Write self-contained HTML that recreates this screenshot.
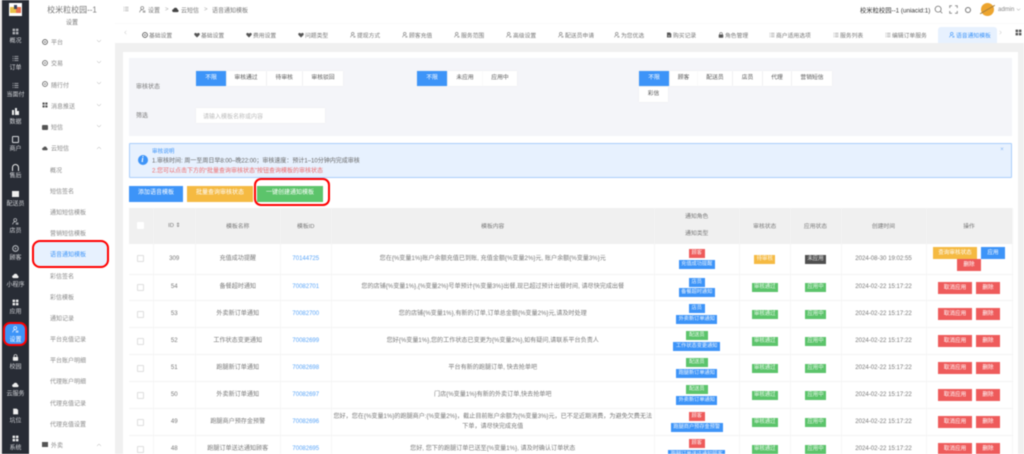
<!DOCTYPE html>
<html lang="zh"><head><meta charset="utf-8"><title>语音通知模板</title>
<style>
*{box-sizing:border-box}
html,body{margin:0;padding:0;width:1024px;height:454px;overflow:hidden;background:#fff}
#r{position:relative;width:1024px;height:454px;overflow:hidden;font-family:"Liberation Sans","Noto Sans CJK SC",sans-serif;font-size:6px;color:#666;filter:blur(.4px);background:#f0f0f0}
.a{position:absolute}
.c{position:absolute;transform:translate(-50%,-50%);white-space:nowrap}
.l{position:absolute;transform:translateY(-50%);white-space:nowrap}
svg{display:block}
.side{left:2px;top:0;width:27px;height:454px;background:#282c35}
.side .c{color:#d5d7db;font-size:6px}
.menu{left:29px;top:0;width:86px;height:454px;background:#fff}
.menu .l{color:#858585}
.b{position:absolute;height:15px;line-height:15px;text-align:center;background:#fff;color:#555;font-size:5.8px;top:71px;box-shadow:0 0 1px #e6e6e6}
.b.on{background:#3d94f8;color:#fff}
.btn{position:absolute;top:186px;height:15.5px;line-height:15.5px;text-align:center;color:#fff;font-size:6px}
table{position:absolute;left:129px;top:208px;width:883px;border-collapse:collapse;table-layout:fixed;background:#fff}
th{background:#f0f0f0;font-weight:normal;color:#777;font-size:5.8px;padding:0;text-align:center;border-right:1px solid #f4f4f4}
td{padding:0;text-align:center;color:#777;font-size:6.1px;border-bottom:1px solid #f3f3f3;border-right:1px solid #f7f7f7;line-height:10.5px}
td a{color:#5aa5f8;text-decoration:none;font-size:6px}
.cb{display:block;width:7px;height:7px;border:1px solid #dedede;border-radius:1px;background:#fff;margin:0 auto}
.g{display:block;width:max-content;margin:0 auto;height:9px;line-height:9px;padding:0 3px;color:rgba(255,255,255,.88);font-size:5.2px;white-space:nowrap;overflow:hidden}
.g+.g{margin-top:1.5px;padding:0 2.5px}
.re{background:#ee5b5b}.bl{background:#3d94f8}.gr{background:#5cc46b}.ye{background:#f5ba42}.da{background:#4f4f4f}
.s{display:inline-block;height:9px;line-height:9px;color:rgba(255,255,255,.88);font-size:5.4px;text-align:center}
.o{display:inline-block;height:12px;line-height:12px;color:#fff;font-size:5.6px;text-align:center;vertical-align:top}
.tab{position:absolute;top:35px;transform:translateY(-50%);font-size:5.8px;color:#777;white-space:nowrap}
.ti{position:absolute;top:32px;width:6px;height:6px}
</style></head><body>
<div id="r">
<svg width="0" height="0" style="position:absolute"><defs>
<symbol id="u" viewBox="0 0 12 12"><circle cx="5.5" cy="3.5" r="2.6" fill="none" stroke="currentColor" stroke-width="1.1"/><path d="M1 11c.5-3 2.200-4.500 4.500-4.500M6.500 8.500h4.500M6.500 10.500h4.500" fill="none" stroke="currentColor" stroke-width="1.1"/></symbol>
<symbol id="h" viewBox="0 0 12 12"><path d="M6 11L1 6C-.5 3.500 1.500 1.500 3.500 1.800 4.700 2 5.500 2.700 6 3.500 6.500 2.700 7.300 2 8.500 1.800 10.500 1.500 12.500 3.500 11 6Z" fill="currentColor"/></symbol>
<symbol id="li" viewBox="0 0 12 12"><path d="M1 2.500h1.500M4 2.500h7M1 6h1.500M4 6h7M1 9.500h1.500M4 9.500h7" stroke="currentColor" stroke-width="1.100" fill="none"/></symbol>
<symbol id="lk" viewBox="0 0 12 12"><rect x="1.500" y="5" width="9" height="6.500" rx="1" fill="currentColor"/><path d="M3.500 5V3.500a2.500 2.500 0 0 1 5 0V5" fill="none" stroke="currentColor" stroke-width="1.200"/></symbol>
<symbol id="cl" viewBox="0 0 12 12"><path d="M3 10.500a2.500 2.500 0 0 1-.5-5 3.600 3.600 0 0 1 7 .5 2.300 2.300 0 0 1 0 4.500Z" fill="currentColor"/></symbol>
<symbol id="gr" viewBox="0 0 12 12"><rect x="1" y="1" width="4.300" height="4.300" rx=".6" fill="currentColor"/><rect x="6.700" y="1" width="4.300" height="4.300" rx=".6" fill="currentColor"/><rect x="1" y="6.700" width="4.300" height="4.300" rx=".6" fill="currentColor"/><rect x="6.700" y="6.700" width="4.300" height="4.300" rx=".6" fill="currentColor"/></symbol>
<symbol id="ci" viewBox="0 0 12 12"><circle cx="6" cy="6" r="4.800" fill="none" stroke="currentColor" stroke-width="1.800"/><circle cx="6" cy="6" r="1.500" fill="currentColor"/></symbol>
<symbol id="do" viewBox="0 0 12 12"><path d="M2 1h6l2.500 2.500V11H2Z" fill="currentColor"/><path d="M4 7h4M4 9h4" stroke="#fff" stroke-width=".8"/></symbol>
<symbol id="ar" viewBox="0 0 12 12"><path d="M2 4l4 4 4-4" fill="none" stroke="currentColor" stroke-width="1"/></symbol>
</defs></svg>

<div class="a" style="left:0;top:0;width:2px;height:454px;background:#e9e6e6"></div>
<div class="a side"></div>
<div class="a" style="left:9px;top:3px;width:13px;height:13px;background:#fff"></div>
<div class="a" style="left:10px;top:7px;width:6px;height:6px;background:#e8c24b"></div>
<div class="a" style="left:16px;top:7px;width:5px;height:6px;background:#e9714f"></div>
<div class="a" style="left:14px;top:5px;width:3px;height:4px;background:#3a4560"></div>

<div style="color:#d5d7db">
<svg class="a" style="left:12px;top:28px" width="7" height="7"><use href="#gr" color="#aeb0b5"/></svg><div class="c" style="left:15.500px;top:40px;color:#d5d7db">概况</div>
<svg class="a" style="left:12px;top:55px" width="7" height="7"><use href="#li" color="#d5d7db"/></svg><div class="c" style="left:15.500px;top:67px;color:#d5d7db">订单</div>
<svg class="a" style="left:12px;top:82px" width="7" height="7"><use href="#li" color="#d5d7db"/></svg><div class="c" style="left:15.500px;top:94px;color:#d5d7db">当面付</div>
<div class="a" style="left:12px;top:110px;width:2px;height:5px;background:#eee"></div><div class="a" style="left:14.500px;top:108px;width:2px;height:7px;background:#eee"></div><div class="a" style="left:17px;top:111px;width:2px;height:4px;background:#eee"></div><div class="c" style="left:15.500px;top:121px;color:#d5d7db">数据</div>
<div class="a" style="left:12px;top:136px;width:7px;height:7px;border:1px solid #d5d7db;border-radius:1px"></div><div class="c" style="left:15.500px;top:148px;color:#d5d7db">商户</div>
<div class="a" style="left:12px;top:164px;width:7px;height:7px;border:1.500px solid #eee;border-bottom:0;border-radius:4px 4px 0 0"></div><div class="c" style="left:15.500px;top:175px;color:#d5d7db">售后</div>
<div class="a" style="left:12px;top:191px;width:7px;height:6px;background:#eee"></div><div class="c" style="left:15.500px;top:203px;color:#d5d7db">配送员</div>
<svg class="a" style="left:12px;top:218px" width="7" height="7"><use href="#u" color="#d5d7db"/></svg><div class="c" style="left:15.500px;top:230px;color:#d5d7db">店员</div>
<svg class="a" style="left:12px;top:245px" width="7" height="7"><use href="#ci" color="#b8bbc0"/></svg><div class="c" style="left:15.500px;top:257px;color:#d5d7db">顾客</div>
<svg class="a" style="left:12px;top:272px" width="7" height="7"><use href="#cl" color="#eee"/></svg><div class="c" style="left:15.500px;top:284px;color:#d5d7db">小程序</div>
<svg class="a" style="left:12px;top:299px" width="7" height="7"><use href="#gr" color="#eee"/></svg><div class="c" style="left:15.500px;top:311px;color:#d5d7db">应用</div>
<div class="a" style="left:3px;top:322px;width:24px;height:24px;background:#3d94f8;border:2px solid #f00;border-radius:7px"></div>
<svg class="a" style="left:12px;top:326px" width="7" height="7"><use href="#u" color="#fff"/></svg><div class="c" style="left:15.500px;top:339px;color:#fff">设置</div>
<svg class="a" style="left:12px;top:354px" width="7" height="7"><use href="#lk" color="#eee"/></svg><div class="c" style="left:15.500px;top:366px;color:#d5d7db">校园</div>
<svg class="a" style="left:12px;top:381px" width="7" height="7"><use href="#cl" color="#eee"/></svg><div class="c" style="left:15.500px;top:393px;color:#d5d7db">云服务</div>
<svg class="a" style="left:12px;top:408px" width="7" height="7"><use href="#do" color="#eee"/></svg><div class="c" style="left:15.500px;top:420px;color:#d5d7db">坑位</div>
<svg class="a" style="left:12px;top:435px" width="7" height="7"><use href="#gr" color="#eee"/></svg><div class="c" style="left:15.500px;top:447px;color:#d5d7db">系统</div>
</div>

<div class="a menu"></div>
<div class="c" style="left:72px;top:10px;font-size:8px;color:#777">校米粒校园--1</div>
<div class="c" style="left:72px;top:21.500px;color:#777">设置</div>
<div style="color:#777">
<svg class="a" style="left:42px;top:39px" width="6" height="6"><use href="#ci" color="#555"/></svg><div class="l" style="left:51px;top:42px;color:#888">平台</div>
<svg class="a" style="left:42px;top:60px" width="6" height="6"><use href="#ci" color="#666"/></svg><div class="l" style="left:51px;top:63px;color:#888">交易</div>
<svg class="a" style="left:42px;top:81px" width="6" height="6"><use href="#ci" color="#666"/></svg><div class="l" style="left:51px;top:84.500px;color:#888">随行付</div>
<svg class="a" style="left:42px;top:102px" width="6" height="6"><use href="#gr" color="#555"/></svg><div class="l" style="left:51px;top:105.500px;color:#888">消息推送</div>
<div class="a" style="left:42px;top:124.500px;width:6px;height:5px;background:#555;border-radius:1px"></div><div class="l" style="left:51px;top:127px;color:#888">短信</div>
<svg class="a" style="left:42px;top:145px" width="6" height="6"><use href="#cl" color="#555"/></svg><div class="l" style="left:51px;top:148px;color:#888">云短信</div>
<svg class="a" style="left:96px;top:38px" width="6" height="6"><use href="#ar" color="#aaa"/></svg>
<svg class="a" style="left:96px;top:59px" width="6" height="6"><use href="#ar" color="#aaa"/></svg>
<svg class="a" style="left:96px;top:80px" width="6" height="6"><use href="#ar" color="#aaa"/></svg>
<svg class="a" style="left:96px;top:102px" width="6" height="6"><use href="#ar" color="#aaa"/></svg>
<svg class="a" style="left:96px;top:123px" width="6" height="6"><use href="#ar" color="#aaa"/></svg>
<svg class="a" style="left:96px;top:145px;transform:rotate(180deg)" width="6" height="6"><use href="#ar" color="#aaa"/></svg>
</div>
<div class="l" style="left:50px;top:169.500px;color:#888">概况</div>
<div class="l" style="left:50px;top:190.500px;color:#888">短信签名</div>
<div class="l" style="left:50px;top:211.500px;color:#888">通知短信模板</div>
<div class="l" style="left:50px;top:233px;color:#888">营销短信模板</div>
<div class="a" style="left:32px;top:240px;width:77px;height:28px;background:#e7f1fe;border:2px solid #f00;border-radius:8px"></div>
<div class="l" style="left:50px;top:254px;color:#3d94f8">语音通知模板</div>
<div class="l" style="left:50px;top:275.500px;color:#888">彩信签名</div>
<div class="l" style="left:50px;top:296.500px;color:#888">彩信模板</div>
<div class="l" style="left:50px;top:317.500px;color:#888">通知记录</div>
<div class="l" style="left:50px;top:339px;color:#888">平台充值记录</div>
<div class="l" style="left:50px;top:360px;color:#888">平台账户明细</div>
<div class="l" style="left:50px;top:381px;color:#888">代理账户明细</div>
<div class="l" style="left:50px;top:402.500px;color:#888">代理充值记录</div>
<div class="l" style="left:50px;top:423.500px;color:#888">代理充值设置</div>
<div class="a" style="left:42px;top:442px;width:6px;height:5px;background:#555"></div><div class="l" style="left:51px;top:445px;color:#888">外卖</div>
<svg class="a" style="left:96px;top:442px;transform:rotate(180deg)" width="6" height="6"><use href="#ar" color="#aaa"/></svg>

<div class="a" style="left:115px;top:0;width:909px;height:43px;background:#fff"></div>
<div class="a" style="left:115px;top:23px;width:909px;height:1px;background:#fafafa"></div>
<svg class="a" style="left:123px;top:6px" width="6" height="6"><use href="#li" color="#888"/></svg>
<svg class="a" style="left:139px;top:6px" width="7" height="7"><use href="#u" color="#777"/></svg>
<div class="l" style="left:148px;top:9.500px;color:#777">设置</div>
<div class="l" style="left:165px;top:9.500px;color:#aaa">&gt;</div>
<svg class="a" style="left:172px;top:6px" width="7" height="7"><use href="#cl" color="#444"/></svg>
<div class="l" style="left:181px;top:9.500px;color:#777">云短信</div>
<div class="l" style="left:204px;top:9.500px;color:#aaa">&gt;</div>
<div class="l" style="left:212px;top:9.500px;color:#777">语音通知模板</div>
<div class="l" style="left:860px;top:9.500px;font-size:6.300px;color:#333">校米粒校园--1 (uniacid:1)</div>
<svg class="a" style="left:934px;top:5px" width="9" height="9" viewBox="0 0 12 12"><circle cx="5.500" cy="5.500" r="4" fill="none" stroke="#777" stroke-width="1.100"/><path d="M8.500 8.500L11 11" stroke="#777" stroke-width="1.100"/></svg>
<svg class="a" style="left:949px;top:5px" width="9" height="9" viewBox="0 0 12 12"><path d="M1 4V1h3M8 1h3v3M11 8v3H8M4 11H1V8" fill="none" stroke="#777" stroke-width="1.100"/></svg>
<div class="a" style="left:965px;top:6.500px;width:6px;height:6px;border:1px solid #777;border-radius:50%"></div>
<div class="a" style="left:981px;top:3px;width:13px;height:13px;border-radius:50%;background:#eda52e"></div>
<div class="a" style="left:979px;top:9px;width:17px;height:1.200px;background:#a8803c;transform:rotate(-30deg)"></div>
<div class="l" style="left:998px;top:9.500px;color:#888">admin</div>
<svg class="a" style="left:1016px;top:7px" width="5" height="5"><use href="#ar" color="#777"/></svg>

<svg class="a" style="left:123px;top:30px;transform:rotate(90deg)" width="5" height="5"><use href="#ar" color="#aaa"/></svg>
<svg class="ti" style="left:142px"><use href="#ci" color="#555"/></svg><div class="tab" style="left:149px">基础设置</div>
<svg class="ti" style="left:194px"><use href="#h" color="#555"/></svg><div class="tab" style="left:201px">基础设置</div>
<svg class="ti" style="left:246px"><use href="#h" color="#555"/></svg><div class="tab" style="left:253px">费用设置</div>
<svg class="ti" style="left:298px"><use href="#h" color="#555"/></svg><div class="tab" style="left:305px">问题类型</div>
<svg class="ti" style="left:350px"><use href="#u" color="#777"/></svg><div class="tab" style="left:357px">提现方式</div>
<svg class="ti" style="left:402px"><use href="#u" color="#777"/></svg><div class="tab" style="left:409px">顾客充值</div>
<svg class="ti" style="left:454px"><use href="#u" color="#777"/></svg><div class="tab" style="left:461px">服务范围</div>
<svg class="ti" style="left:506px"><use href="#u" color="#777"/></svg><div class="tab" style="left:513px">高级设置</div>
<svg class="ti" style="left:558px"><use href="#u" color="#777"/></svg><div class="tab" style="left:565px">配送员申请</div>
<svg class="ti" style="left:614px"><use href="#u" color="#777"/></svg><div class="tab" style="left:621px">为您优选</div>
<svg class="ti" style="left:666px"><use href="#do" color="#555"/></svg><div class="tab" style="left:673px">购买记录</div>
<svg class="ti" style="left:718px"><use href="#lk" color="#555"/></svg><div class="tab" style="left:725px">角色管理</div>
<svg class="ti" style="left:769px"><use href="#li" color="#777"/></svg><div class="tab" style="left:776px">商户适用选项</div>
<svg class="ti" style="left:833px"><use href="#li" color="#777"/></svg><div class="tab" style="left:840px">服务列表</div>
<svg class="ti" style="left:885px"><use href="#li" color="#777"/></svg><div class="tab" style="left:892px">编辑订单服务</div>
<div class="a" style="left:938px;top:27px;width:59px;height:16px;background:#e7f1fe;border-radius:3px 3px 0 0"></div>
<svg class="ti" style="left:949px;color:#3d94f8"><use href="#u" color="#3d94f8"/></svg><div class="tab" style="left:956px;color:#3d94f8">语音通知模板</div>
<svg class="a" style="left:998px;top:30px;transform:rotate(-90deg)" width="5" height="5"><use href="#ar" color="#aaa"/></svg>
<svg class="a" style="left:1015px;top:29px" width="7" height="7"><use href="#gr" color="#555"/></svg>

<div class="a" style="left:123px;top:52px;width:895px;height:402px;background:#fff"></div>
<div class="a" style="left:129px;top:58px;width:883px;height:78px;background:#f4f5f9"></div>
<div class="l" style="left:136px;top:86px;color:#777">审核状态</div>
<div class="l" style="left:136px;top:115px;color:#777">筛选</div>
<div class="b on" style="left:196px;width:30px">不限</div>
<div class="b" style="left:226.500px;width:39px">审核通过</div>
<div class="b" style="left:266.500px;width:35.500px">待审核</div>
<div class="b" style="left:303px;width:40px">审核驳回</div>
<div class="b on" style="left:417px;width:30px">不限</div>
<div class="b" style="left:447.500px;width:35px">未应用</div>
<div class="b" style="left:483px;width:34px">应用中</div>
<div class="b on" style="left:639px;width:30px">不限</div>
<div class="b" style="left:669.500px;width:28px">顾客</div>
<div class="b" style="left:698px;width:34px">配送员</div>
<div class="b" style="left:733px;width:29px">店员</div>
<div class="b" style="left:763px;width:28px">代理</div>
<div class="b" style="left:792px;width:40px">营销短信</div>
<div class="b" style="left:639px;width:29px;top:87px">彩信</div>
<div class="a" style="left:196px;top:108px;width:129px;height:15px;background:#fff;box-shadow:0 0 1px #e6e6e6"></div>
<div class="l" style="left:203px;top:115.500px;color:#bbb">请输入模板名称或内容</div>

<div class="a" style="left:129px;top:143px;width:883px;height:34.500px;background:#e7f1fe;border:1px solid #a9cdfb;border-radius:1px"></div>
<div class="a" style="left:137.500px;top:155px;width:10px;height:10px;border-radius:50%;background:#3d94f8;color:#fff;font:italic bold 8px/10px 'Liberation Serif',serif;text-align:center">i</div>
<div class="l" style="left:152px;top:150.500px;color:#3d94f8;font-size:5.600px">审核说明</div>
<div class="l" style="left:152px;top:160px;color:#666">1.审核时间: 周一至周日早8:00–晚22:00；审核速度：预计1–10分钟内完成审核</div>
<div class="l" style="left:152px;top:169.500px;color:#ee6a6a">2.您可以点击下方的“批量查询审核状态”按钮查询模板的审核状态</div>
<div class="c" style="left:1002px;top:150px;color:#85b5f5;font-size:6px">×</div>

<div class="btn" style="left:129px;width:54px;background:#3d94f8">添加语音模板</div>
<div class="btn" style="left:187px;width:66px;background:#f5ba42">批量查询审核状态</div>
<div class="btn" style="left:257px;width:66px;background:#5cc46b">一键创建通知模板</div>
<div class="a" style="left:253.500px;top:177.500px;width:76.500px;height:28.500px;border:2px solid #f00;border-radius:7px"></div>

<table>
<colgroup><col style="width:24px"><col style="width:42.500px"><col style="width:84.500px"><col style="width:51.500px"><col style="width:322.500px"><col style="width:85.500px"><col style="width:50.500px"><col style="width:51px"><col style="width:85px"><col style="width:86px"></colgroup>
<tr style="height:35.500px"><th><span class="cb" style="border-color:#fff"></span></th><th>ID ⇕</th><th>模板名称</th><th>模板ID</th><th>模板内容</th><th><div style="line-height:17px">通知角色</div><div style="line-height:17px">通知类型</div></th><th>审核状态</th><th>应用状态</th><th>创建时间</th><th>操作</th></tr>
<tr style="height:31px"><td><span class="cb"></span></td><td>309</td><td>充值成功提醒</td><td><a>70144725</a></td><td>您在{%变量1%}账户余额充值已到账, 充值金额{%变量2%}元, 账户余额{%变量3%}元</td><td><span class="g re">顾客</span><span class="g bl">充值成功提醒</span></td><td><span class="s ye" style="width:21px">待审核</span></td><td><span class="s da" style="width:21px">未应用</span></td><td>2024-08-30 19:02:55</td><td style="line-height:0"><div style="height:12px"><span class="o ye" style="width:44px">查询审核状态</span><span class="o bl" style="width:24px;margin-left:4px">应用</span></div><div><span class="o re" style="width:24px;margin-top:0">删除</span></div></td></tr>
<tr style="height:26px"><td><span class="cb"></span></td><td>54</td><td>备餐超时通知</td><td><a>70082701</a></td><td>您的店铺{%变量1%},{%变量2%}号单预计{%变量3%}出餐,现已超过预计出餐时间, 请尽快完成出餐</td><td><span class="g bl">店员</span><span class="g bl">备餐超时通知</span></td><td><span class="s gr" style="width:26px">审核通过</span></td><td><span class="s gr" style="width:21px">应用中</span></td><td>2024-02-22 15:17:22</td><td><span class="o re" style="width:34px">取消应用</span><span class="o re" style="width:24px;margin-left:4px">删除</span></td></tr>
<tr style="height:27px"><td><span class="cb"></span></td><td>53</td><td>外卖新订单通知</td><td><a>70082700</a></td><td>您的店铺{%变量1%},有新的订单,订单总金额{%变量2%}元,请及时处理</td><td><span class="g bl">店员</span><span class="g bl">外卖新订单通知</span></td><td><span class="s gr" style="width:26px">审核通过</span></td><td><span class="s gr" style="width:21px">应用中</span></td><td>2024-02-22 15:17:22</td><td><span class="o re" style="width:34px">取消应用</span><span class="o re" style="width:24px;margin-left:4px">删除</span></td></tr>
<tr style="height:27px"><td><span class="cb"></span></td><td>52</td><td>工作状态变更通知</td><td><a>70082699</a></td><td>您好{%变量1%},您的工作状态已变更为{%变量2%},如有疑问,请联系平台负责人</td><td><span class="g gr">配送员</span><span class="g bl">工作状态变更通知</span></td><td><span class="s gr" style="width:26px">审核通过</span></td><td><span class="s gr" style="width:21px">应用中</span></td><td>2024-02-22 15:17:22</td><td><span class="o re" style="width:34px">取消应用</span><span class="o re" style="width:24px;margin-left:4px">删除</span></td></tr>
<tr style="height:27px"><td><span class="cb"></span></td><td>51</td><td>跑腿新订单通知</td><td><a>70082698</a></td><td>平台有新的跑腿订单, 快去抢单吧</td><td><span class="g gr">配送员</span><span class="g bl">跑腿新订单通知</span></td><td><span class="s gr" style="width:26px">审核通过</span></td><td><span class="s gr" style="width:21px">应用中</span></td><td>2024-02-22 15:17:22</td><td><span class="o re" style="width:34px">取消应用</span><span class="o re" style="width:24px;margin-left:4px">删除</span></td></tr>
<tr style="height:27px"><td><span class="cb"></span></td><td>50</td><td>外卖新订单通知</td><td><a>70082697</a></td><td>门店{%变量1%}有新的外卖订单,快去抢单吧</td><td><span class="g gr">配送员</span><span class="g bl">外卖新订单通知</span></td><td><span class="s gr" style="width:26px">审核通过</span></td><td><span class="s gr" style="width:21px">应用中</span></td><td>2024-02-22 15:17:22</td><td><span class="o re" style="width:34px">取消应用</span><span class="o re" style="width:24px;margin-left:4px">删除</span></td></tr>
<tr style="height:27px"><td><span class="cb"></span></td><td>49</td><td>跑腿商户预存金预警</td><td><a>70082696</a></td><td>您好，您在{%变量1%}的跑腿商户:{%变量2%}，截止目前账户余额为{%变量3%}元，已不足近期消费，为避免欠费无法<br>下单，请尽快完成充值</td><td><span class="g re">顾客</span><span class="g bl">跑腿商户预存金预警</span></td><td><span class="s gr" style="width:26px">审核通过</span></td><td><span class="s gr" style="width:21px">应用中</span></td><td>2024-02-22 15:17:22</td><td><span class="o re" style="width:34px">取消应用</span><span class="o re" style="width:24px;margin-left:4px">删除</span></td></tr>
<tr style="height:27px"><td><span class="cb"></span></td><td>48</td><td>跑腿订单送达通知顾客</td><td><a>70082695</a></td><td>您好, 您下的跑腿订单已送至{%变量1%}, 请及时确认订单状态</td><td><span class="g re">顾客</span><span class="g bl">跑腿订单送达通知顾客</span></td><td><span class="s gr" style="width:26px">审核通过</span></td><td><span class="s gr" style="width:21px">应用中</span></td><td>2024-02-22 15:17:22</td><td><span class="o re" style="width:34px">取消应用</span><span class="o re" style="width:24px;margin-left:4px">删除</span></td></tr>
</table>
</div>
</body></html>
